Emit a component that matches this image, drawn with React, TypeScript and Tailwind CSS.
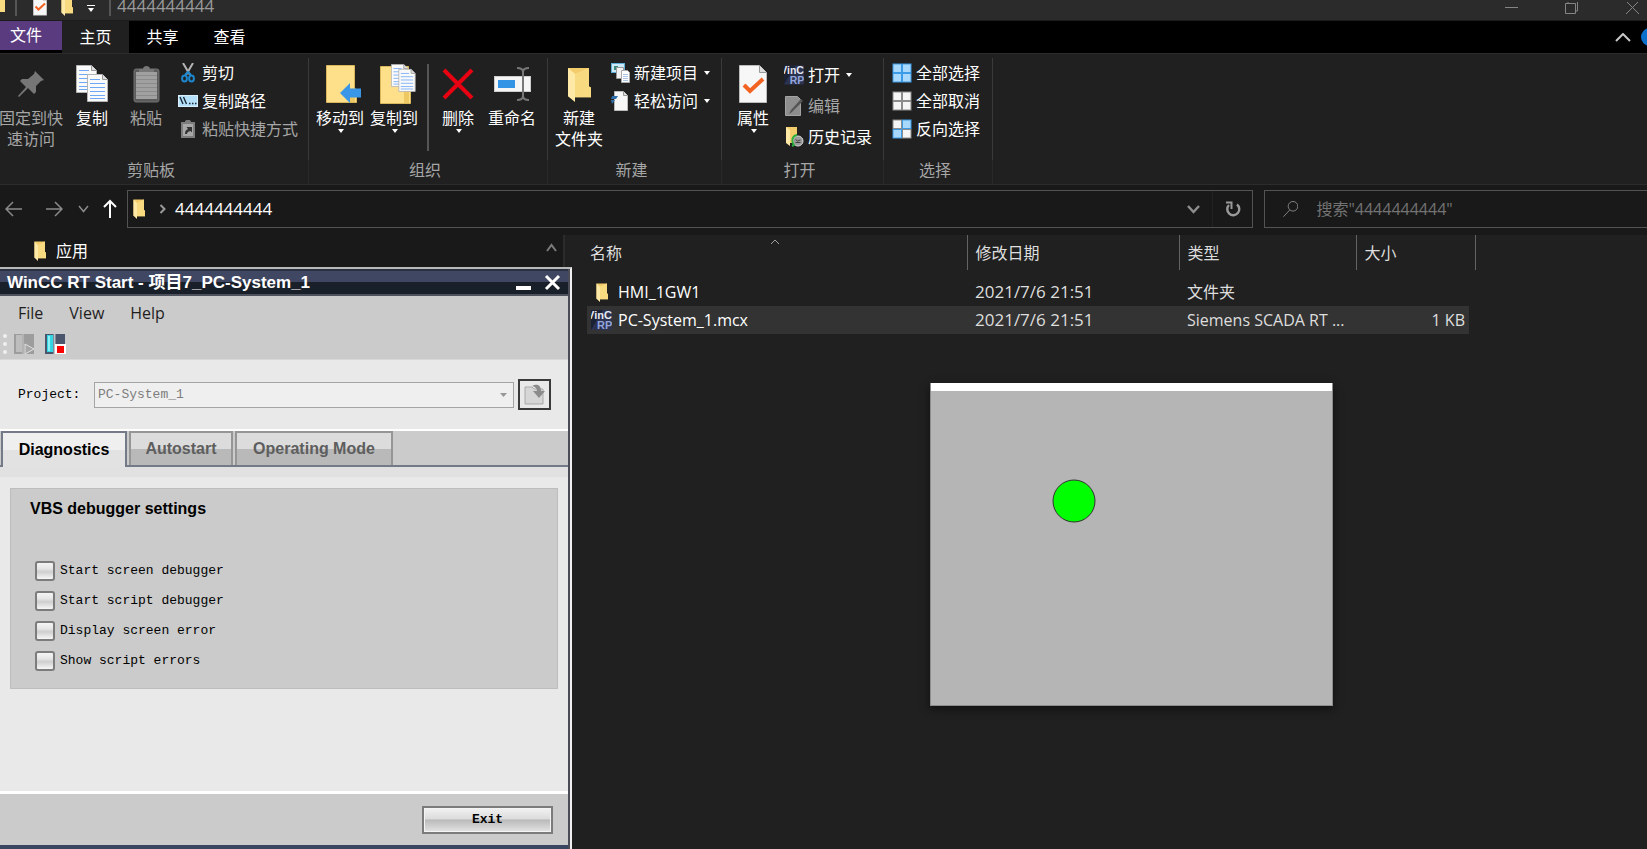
import type { ReactNode } from "react";

const UI_FONT = "font-['Open_Sans','Noto_Sans_CJK_SC',sans-serif]";
const MONO_FONT = "font-['Liberation_Mono',monospace]";
const BOLD_FONT = "font-['Liberation_Sans','Noto_Sans_CJK_SC',sans-serif]";

/* ---------- icons ---------- */

function FolderIcon({ className = "h-5 w-3" }: { className?: string }) {
  return (
    <svg className={className} viewBox="0 0 24 36" preserveAspectRatio="none" aria-hidden="true">
      <path d="M1 1h21v19l2 1v10H8L1 30z" fill="#f3cd6b" />
      <path d="M8 7l14-6v19l2 1v10H8z" fill="#f8da80" />
      <path d="M1 1l7 6v29l-7-6z" fill="#ffe9a6" />
    </svg>
  );
}

function PinIcon() {
  return (
    <svg width="28" height="28" viewBox="0 0 28 28" aria-hidden="true">
      <path d="M18 1l9 9-3 1-5 5 0 6-2 2-6-6-9 9-1-1 8-9-6-6 2-2 6 0 6-5z" fill="#767676" />
    </svg>
  );
}

function Sheet({ x, y }: { x: number; y: number }) {
  return (
    <g transform={`translate(${x} ${y})`}>
      <path d="M.5.5h15l5 5v22H.5z" fill="#fafafa" stroke="#b4b4b4" />
      <path d="M15.500.5v5h5" fill="#ddd" stroke="#999" />
      <path d="M3 5.500h10M3 9.500h15M3 13.500h15M3 17.500h15M3 21.500h15M3 24.500h15" stroke="#6fa8f5" />
    </g>
  );
}

function CopyIcon() {
  return (
    <svg width="33" height="38" viewBox="0 0 33 38" aria-hidden="true">
      <Sheet x={0} y={0} />
      <Sheet x={11} y={9} />
    </svg>
  );
}

function PasteIcon() {
  return (
    <svg width="27" height="38" viewBox="0 0 27 38" aria-hidden="true">
      <rect x="1" y="4" width="25" height="33" rx="2" fill="#5c5c5c" stroke="#707070" />
      <rect x="3" y="7" width="21" height="27" fill="#a0a0a0" />
      <path d="M3 10.500h21M3 14.500h21M3 18.500h21M3 22.500h21M3 26.500h21M3 30.500h21" stroke="#8b8b8b" />
      <path d="M6 7V4h4c0-4 7-4 7 0h4v3z" fill="#777" />
    </svg>
  );
}

function ScissorsIcon() {
  return (
    <svg width="14" height="20" viewBox="0 0 14 20" aria-hidden="true">
      <path d="M2 0l7 12M12 0L5 12" stroke="#b5b5b5" strokeWidth="2" fill="none" />
      <ellipse cx="3.500" cy="15.500" rx="2.400" ry="3" fill="none" stroke="#1e86cc" strokeWidth="2" />
      <ellipse cx="10.500" cy="15.500" rx="2.400" ry="3" fill="none" stroke="#1e86cc" strokeWidth="2" />
      <path d="M4 12l3-3 3 3" stroke="#1e86cc" strokeWidth="2" fill="none" />
    </svg>
  );
}

function CopyPathIcon() {
  return (
    <svg width="20" height="12" viewBox="0 0 20 12" aria-hidden="true">
      <rect x=".5" y=".5" width="19" height="11" fill="#b4e0fa" stroke="#d9effb" />
      <path d="M2 2l3 7M5.500 2l3 7" stroke="#1b2a35" strokeWidth="1.400" />
      <path d="M11 8.500h1.500M14 8.500h1.500M17 8.500h1.500" stroke="#1b2a35" strokeWidth="1.600" />
    </svg>
  );
}

function PasteShortcutIcon() {
  return (
    <svg width="14" height="18" viewBox="0 0 14 18" aria-hidden="true">
      <path d="M0 2h4c0-3 6-3 6 0h4v16H0z" fill="#7d7d7d" />
      <rect x="2" y="4" width="10" height="12" fill="#a8a8a8" />
      <path d="M4 14c0-3 1-4 3-5L5.500 7H11v5.500L9.500 11C7 11.500 6 12.500 6 14z" fill="#333" />
    </svg>
  );
}

function MoveToIcon() {
  return (
    <svg className="ml-2" width="36" height="38" viewBox="0 0 36 38" aria-hidden="true">
      <path d="M.5.500h28v23l2 1v13H.5z" fill="#ffe08a" stroke="#d9b75c" />
      <path d="M24 24l5-1v14h-5z" fill="#eec862" />
      <path d="M14 28l10-10v5.500h11v9H24V38z" fill="#3a97e8" />
    </svg>
  );
}

function CopyToIcon() {
  return (
    <svg className="ml-2" width="36" height="40" viewBox="0 0 36 40" aria-hidden="true">
      <path d="M.5 2.500h28v23l2 1v13H.5z" fill="#ffe08a" stroke="#d9b75c" />
      <path d="M24 26l5-1v14h-5z" fill="#eec862" />
      <g transform="translate(11 0) scale(.82)">
        <Sheet x={0} y={0} />
        <Sheet x={9} y={6} />
      </g>
    </svg>
  );
}

function DeleteIcon() {
  return (
    <svg width="32" height="32" viewBox="0 0 32 32" aria-hidden="true">
      <path d="M2 2l28 28M30 2L2 30" stroke="#e60012" strokeWidth="4" />
    </svg>
  );
}

function RenameIcon() {
  return (
    <svg width="37" height="34" viewBox="0 0 37 34" aria-hidden="true">
      <rect x=".5" y="9.500" width="36" height="15" fill="#f5f5f5" stroke="#ccc" />
      <rect x="4" y="13" width="17" height="8" fill="#3393e4" />
      <path d="M23 1c4 0 6 1 6 4v24c0 3-2 4-6 4M35 1c-4 0-6 1-6 4v24c0 3 2 4 6 4" fill="none" stroke="#777" strokeWidth="2" />
    </svg>
  );
}

function NewItemIcon() {
  return (
    <svg width="19" height="20" viewBox="0 0 19 20" aria-hidden="true">
      <rect x=".5" y=".5" width="13" height="9" fill="#cde9f7" stroke="#5fb0d8" />
      <path d="M3 3h4v4H3z" fill="#3a8a7c" />
      <path d="M5.500 4.500h7v11h-7z" fill="#f2f2f2" stroke="#999" />
      <path d="M10.500 7.500h6l2 2v10h-8z" fill="#fff" stroke="#aaa" />
      <path d="M12 11.500h5M12 13.500h5M12 15.500h5M12 17.500h5" stroke="#a9c4e6" />
    </svg>
  );
}

function EasyAccessIcon() {
  return (
    <svg width="18" height="20" viewBox="0 0 18 20" aria-hidden="true">
      <path d="M3.500.5h9l4 4v15h-13z" fill="#f7f7f7" stroke="#bbb" />
      <path d="M12.500.5v4h4" fill="#ddd" stroke="#999" />
      <path d="M1 5h6l-2 3H0zM0 9h4L1 13z" fill="#2f6fae" />
    </svg>
  );
}

function CheckDocIcon({ className = "h-[38px] w-7" }: { className?: string }) {
  return (
    <svg className={className} viewBox="0 0 28 38" aria-hidden="true">
      <path d="M.5.5h20l7 7v30H.5z" fill="#f7f7f7" stroke="#bdbdbd" />
      <path d="M20.500.5v7h7" fill="#ddd" stroke="#999" />
      <path d="M5 20l6 6 13-12" fill="none" stroke="#f26322" strokeWidth="4" />
    </svg>
  );
}

function WinCCIcon() {
  return (
    <svg width="21" height="20" viewBox="0 0 21 20" className="overflow-hidden" aria-hidden="true">
      <rect width="21" height="20" fill="#2c3350" />
      <path d="M0 0h12L0 20z" fill="#1c2235" />
      <text x="-4" y="9" fontSize="11" fontWeight="700" fill="#e6e9f2" fontFamily="Liberation Sans, sans-serif">VinC</text>
      <text x="6" y="19" fontSize="11" fontWeight="700" fill="#93a5dc" fontFamily="Liberation Sans, sans-serif">RP</text>
    </svg>
  );
}

function EditIcon() {
  return (
    <svg width="18" height="20" viewBox="0 0 18 20" aria-hidden="true">
      <path d="M.5.5h12l3 3v16H.5z" fill="#8e8e8e" stroke="#a3a3a3" />
      <path d="M4 18l2-4L16 3l2 2L7 16z" fill="#555" />
    </svg>
  );
}

function HistoryIcon() {
  return (
    <svg width="19" height="20" viewBox="0 0 19 20" aria-hidden="true">
      <path d="M1 0h11v16H1z" fill="#f3cd6b" />
      <path d="M1 0l4 3v16l-4-3z" fill="#ffe9a6" />
      <circle cx="13" cy="14" r="5" fill="#9a9a9a" stroke="#d8d8d8" />
      <path d="M10.500 12.500l2 1.500 3-1M10.500 15.500h5" stroke="#444" fill="none" />
      <path d="M12 8c-5 1-6 6-3 10l-2 1" stroke="#2fae3e" strokeWidth="2" fill="none" />
    </svg>
  );
}

function TilesIcon({ on }: { on: boolean[] }) {
  return (
    <svg width="20" height="20" viewBox="0 0 20 20" aria-hidden="true">
      {on.map((lit, i) => (
        <rect
          key={i}
          x={i % 2 ? 10.5 : 1}
          y={i > 1 ? 10.5 : 1}
          width="8.500"
          height="8.500"
          fill={lit ? "#a8d8fb" : "#f5f5f5"}
          stroke={lit ? "#3c9be6" : "#8c8c8c"}
        />
      ))}
    </svg>
  );
}

function Caret() {
  return (
    <svg width="6" height="4" viewBox="0 0 6 4" aria-hidden="true">
      <path d="M0 0h6L3 4z" fill="#fff" />
    </svg>
  );
}

/* ---------- explorer ---------- */

function TitleBar() {
  return (
    <div className="flex h-[21px] items-start overflow-hidden border-b border-[#1c1c1c] bg-[#2b2b2b]">
      <span className="h-3 w-[5px] bg-[#f8da80]" />
      <span className="ml-2.5 h-4 w-0.5 bg-[#565656]" />
      <CheckDocIcon className="-mt-1 ml-4 h-5 w-[14px]" />
      <FolderIcon className="-mt-1 ml-[14px] h-5 w-3" />
      <svg className="mt-[5px] ml-3.5" width="8" height="7" viewBox="0 0 8 7" aria-hidden="true">
        <path d="M0 .5h8" stroke="#fff" />
        <path d="M1 3h6L4 7z" fill="#fff" />
      </svg>
      <span className="ml-3.5 h-4 w-0.5 bg-[#565656]" />
      <span className="ml-1.5 -mt-1 text-[17px] leading-5 text-[#9a9a9a]">4444444444</span>
      <div className="ml-auto flex items-start text-[#858585]">
        <button aria-label="Minimize" className="mr-[47px] h-4">
          <svg width="13" height="12" viewBox="0 0 13 12"><path d="M0 5.500h13" stroke="currentColor" /></svg>
        </button>
        <button aria-label="Restore" className="mr-12 h-4">
          <svg width="13" height="12" viewBox="0 0 13 12" fill="none" stroke="currentColor">
            <path d="M.5 1.500h10v10H.5zM3 1V-1h9.500V9H11" />
          </svg>
        </button>
        <button aria-label="Close" className="mr-2 h-4">
          <svg width="13" height="12" viewBox="0 0 13 12"><path d="M0-1l13 13M13-1L0 12" stroke="currentColor" /></svg>
        </button>
      </div>
    </div>
  );
}

function RibbonTabs() {
  return (
    <div className="flex h-8 overflow-hidden bg-black text-[16px] leading-[29px] text-white">
      <button className="h-[29px] w-[62px] bg-[#5b3b80] pr-2.5">文件</button>
      <button className="h-8 w-[67px] bg-[#202020] leading-8">主页</button>
      <button className="h-8 w-[67px] leading-8">共享</button>
      <button className="h-8 w-[67px] leading-8">查看</button>
      <div className="ml-auto flex items-center">
        <button aria-label="Collapse ribbon" className="mr-2.5">
          <svg width="16" height="9" viewBox="0 0 16 9"><path d="M1 8l7-7 7 7" fill="none" stroke="#c8c8c8" strokeWidth="2" /></svg>
        </button>
        <button aria-label="Help" className="-mr-3 h-[18px] w-[18px] rounded-full bg-[#0a70cc]" />
      </div>
    </div>
  );
}

function Group({ label, className, children }: { label: string; className: string; children: ReactNode }) {
  return (
    <section className={`flex shrink-0 flex-col ${className}`}>
      <div className="mt-1 flex h-[102px] border-r border-[#3a3a3a]">{children}</div>
      <div className="border-r border-[#292929] pr-1.5 pb-1 text-center text-[16px] leading-5 text-[#a6a6a6]">{label}</div>
    </section>
  );
}

type LargeProps = { icon: ReactNode; lines: string[]; caret?: boolean; dim?: boolean; className?: string };

function LargeButton({ icon, lines, caret, dim, className = "w-[54px]" }: LargeProps) {
  return (
    <button className={`flex shrink-0 flex-col items-center pt-1 ${dim ? "text-[#a6a6a6]" : "text-white"} ${className}`}>
      <span className="mb-0.5 flex h-11 items-center">{icon}</span>
      {lines.map((line) => (
        <span key={line} className="text-[16px] leading-[21px] whitespace-nowrap">{line}</span>
      ))}
      {caret && <span className="ml-0.5 flex"><Caret /></span>}
    </button>
  );
}

type SmallProps = { icon: ReactNode; label: string; caret?: boolean; dim?: boolean };

function SmallButton({ icon, label, caret, dim }: SmallProps) {
  return (
    <button className={`flex h-7 items-center text-[16px] whitespace-nowrap ${dim ? "text-[#a6a6a6]" : "text-white"}`}>
      <span className="mr-1 flex w-5 justify-center">{icon}</span>
      {label}
      {caret && <span className="ml-1.5 flex"><Caret /></span>}
    </button>
  );
}

function Ribbon() {
  return (
    <div className="flex overflow-hidden border-y border-[#2c2c2c] bg-[#202020]">
      <Group label="剪贴板" className="w-[309px]">
        <LargeButton icon={<PinIcon />} lines={["固定到快", "速访问"]} dim className="w-[62px]" />
        <LargeButton icon={<CopyIcon />} lines={["复制"]} className="w-[60px]" />
        <LargeButton icon={<PasteIcon />} lines={["粘贴"]} dim className="w-12" />
        <div className="ml-2 flex flex-col pt-px">
          <SmallButton icon={<ScissorsIcon />} label="剪切" />
          <SmallButton icon={<CopyPathIcon />} label="复制路径" />
          <SmallButton icon={<PasteShortcutIcon />} label="粘贴快捷方式" dim />
        </div>
      </Group>
      <Group label="组织" className="w-[239px]">
        <LargeButton icon={<MoveToIcon />} lines={["移动到"]} caret className="ml-1 w-[54px]" />
        <LargeButton icon={<CopyToIcon />} lines={["复制到"]} caret />
        <span className="mt-1.5 ml-1.5 h-[87px] w-0.5 bg-[#555]" />
        <LargeButton icon={<DeleteIcon />} lines={["删除"]} caret className="ml-0.5 w-[54px]" />
        <LargeButton icon={<RenameIcon />} lines={["重命名"]} />
      </Group>
      <Group label="新建" className="w-[174px]">
        <LargeButton icon={<FolderIcon className="h-[35px] w-6" />} lines={["新建", "文件夹"]} className="ml-1 w-[54px]" />
        <div className="ml-1 flex flex-col pt-px">
          <SmallButton icon={<NewItemIcon />} label="新建项目" caret />
          <SmallButton icon={<EasyAccessIcon />} label="轻松访问" caret />
        </div>
      </Group>
      <Group label="打开" className="w-[162px]">
        <LargeButton icon={<CheckDocIcon />} lines={["属性"]} caret className="ml-1 w-[54px]" />
        <div className="ml-1 flex flex-col gap-[3px] pt-[3px]">
          <SmallButton icon={<WinCCIcon />} label="打开" caret />
          <SmallButton icon={<EditIcon />} label="编辑" dim />
          <SmallButton icon={<HistoryIcon />} label="历史记录" />
        </div>
      </Group>
      <Group label="选择" className="w-[109px]">
        <div className="ml-2 flex flex-col pt-px">
          <SmallButton icon={<TilesIcon on={[true, true, true, true]} />} label="全部选择" />
          <SmallButton icon={<TilesIcon on={[false, false, false, false]} />} label="全部取消" />
          <SmallButton icon={<TilesIcon on={[false, true, true, false]} />} label="反向选择" />
        </div>
      </Group>
    </div>
  );
}

function AddressBar() {
  return (
    <div className="flex h-[50px] items-center pt-1 pb-1.5">
      <div className="flex w-[127px] shrink-0 items-center pl-[5px] text-[#8a8a8a]">
        <button aria-label="Back">
          <svg width="18" height="16" viewBox="0 0 18 16" fill="none" stroke="currentColor" strokeWidth="1.500"><path d="M17 8H1M8 1L1 8l7 7" /></svg>
        </button>
        <button aria-label="Forward" className="ml-[22px]">
          <svg width="18" height="16" viewBox="0 0 18 16" fill="none" stroke="currentColor" strokeWidth="1.500"><path d="M1 8h16M10 1l7 7-7 7" /></svg>
        </button>
        <button aria-label="Recent locations" className="ml-[15px]">
          <svg width="11" height="8" viewBox="0 0 11 8" fill="none" stroke="currentColor" strokeWidth="1.500"><path d="M1 1l4.500 5.500L10 1" /></svg>
        </button>
        <button aria-label="Up" className="ml-3.5 text-white">
          <svg width="14" height="20" viewBox="0 0 14 20" fill="none" stroke="currentColor" strokeWidth="2"><path d="M7 19V2M1 8l6-6 6 6" /></svg>
        </button>
      </div>
      <div className="flex h-[38px] flex-1 items-center border border-[#535353] pl-[5px]">
        <FolderIcon className="h-5 w-3" />
        <svg className="ml-3.5" width="8" height="10" viewBox="0 0 8 10" aria-hidden="true">
          <path d="M1.500 1l4 4-4 4" fill="none" stroke="#9a9a9a" strokeWidth="2" />
        </svg>
        <a href="#folder" className="ml-2 text-[17px] text-white">4444444444</a>
        <button aria-label="Previous locations" className="mr-3 ml-auto">
          <svg width="13" height="9" viewBox="0 0 13 9"><path d="M1 1l5.500 6L12 1" fill="none" stroke="#8e8e8e" strokeWidth="2.500" /></svg>
        </button>
        <button aria-label="Refresh" className="flex h-full w-10 items-center justify-center border-l border-[#222]">
          <svg width="16" height="17" viewBox="0 0 16 17" fill="none" stroke="#9a9a9a" strokeWidth="2.400">
            <path d="M12 3.500A6 6 0 1 1 4 4" />
            <path d="M1 1.500h5.500V8" strokeWidth="2" />
          </svg>
        </button>
      </div>
      <label className="ml-[11px] flex h-[38px] w-[383px] items-center border border-r-0 border-[#535353] pl-[18px]">
        <svg width="17" height="18" viewBox="0 0 17 18" fill="none" stroke="#8a8a8a" aria-hidden="true">
          <circle cx="11" cy="6" r="5.300" />
          <path d="M7.500 10L.5 17.500" />
        </svg>
        <input
          aria-label="搜索"
          placeholder={'搜索"4444444444"'}
          className="ml-[18px] w-full bg-transparent text-[16px] text-white outline-none placeholder:text-[#737373]"
        />
      </label>
    </div>
  );
}

const columns = ["修改日期", "类型"];

const files = [
  { name: "HMI_1GW1", icon: <FolderIcon className="h-[19px] w-3" />, date: "2021/7/6 21:51", type: "文件夹", size: "" },
  { name: "PC-System_1.mcx", icon: <WinCCIcon />, date: "2021/7/6 21:51", type: "Siemens SCADA RT ...", size: "1 KB", hover: true },
];

function FileList() {
  return (
    <div className="relative flex-1 overflow-hidden bg-[#202020] pl-[22px]">
      <svg className="absolute top-1 left-[205px]" width="10" height="6" viewBox="0 0 10 6" aria-hidden="true">
        <path d="M1 5l4-4 4 4" fill="none" stroke="#a0a0a0" />
      </svg>
      <table className="w-[888px] table-fixed border-collapse">
        <colgroup>
          <col className="w-[380px]" />
          <col className="w-[212px]" />
          <col className="w-[177px]" />
          <col className="w-[113px]" />
          <col className="w-1.5" />
        </colgroup>
        <thead>
          <tr className="h-[35px] text-left text-[16px] text-[#dedede]">
            <th className="border-r border-[#636363] pl-[3px] font-normal">名称</th>
            {columns.map((name) => (
              <th key={name} className="border-r border-[#636363] pl-2 font-normal">{name}</th>
            ))}
            <th colSpan={2} className="border-r border-[#636363] pl-2 font-normal">大小</th>
          </tr>
        </thead>
        <tbody className="text-[16px] leading-7 whitespace-nowrap text-[#dedede] before:block before:h-2 before:content-['']">
          {files.map((file) => {
            const bg = file.hover ? "bg-[#333]" : "";
            return (
              <tr key={file.name} className="h-7">
                <td className={`${bg} py-0 pl-1`}>
                  <span className="flex items-center text-white">
                    <span className="mr-1.5 flex w-[21px] justify-center">{file.icon}</span>
                    {file.name}
                  </span>
                </td>
                <td className={`${bg} py-0 pl-2 text-[17px]`}>{file.date}</td>
                <td className={`${bg} py-0 pl-2`}>{file.type}</td>
                <td className={`${bg} py-0 pr-1 text-right`}>{file.size}</td>
                <td />
              </tr>
            );
          })}
        </tbody>
      </table>
    </div>
  );
}

function Explorer() {
  return (
    <div className="flex min-h-screen flex-col bg-[#191919]">
      <TitleBar />
      <RibbonTabs />
      <Ribbon />
      <AddressBar />
      <main className="flex flex-1">
        <nav className="flex w-[565px] shrink-0 items-start border-r-2 border-[#2b2b2b] pl-[34px]">
          <a href="#apps" className="flex h-8 items-center gap-2.5 text-[16px] text-white">
            <FolderIcon className="h-5 w-3" />
            应用
          </a>
          <span className="mt-2 mr-1.5 ml-auto">
            <svg width="11" height="9" viewBox="0 0 11 9" aria-hidden="true">
              <path d="M1 8l4.500-6L10 8" fill="none" stroke="#7b7b7b" strokeWidth="2" />
            </svg>
          </span>
        </nav>
        <FileList />
      </main>
    </div>
  );
}

/* ---------- WinCC RT Start ---------- */

const options = ["Start screen debugger", "Start script debugger", "Display screen error", "Show script errors"];

const idleTab =
  "border-2 border-b-0 border-[#969696] bg-[linear-gradient(#dcdcdc_50%,#b9b9b9_50%)] text-[#5e5e5e]";

function RuntimeWindow() {
  return (
    <section className="absolute top-[267px] bottom-0 left-0 flex w-[572px] flex-col border-t-2 border-r-2 border-t-[#b8b8b8] border-r-[#f0f0f0] bg-[#e9e9e9] text-black">
      <div className="flex min-h-0 flex-1 flex-col border-r-2 border-[#4a4d55]">
        <header className="flex h-[27px] shrink-0 items-center border-t-2 border-b-2 border-t-[#2b3040] border-b-[#4d525c] bg-[linear-gradient(#3f4762_50%,#1a202a_50%)] pl-[7px] text-white">
          <h1 className={`${BOLD_FONT} text-[17px] leading-5 font-bold`}>WinCC RT Start - 项目7_PC-System_1</h1>
          <button aria-label="Minimize window" className="mr-[13px] ml-auto flex h-[14px] items-end">
            <span className="block h-1 w-[15px] bg-white" />
          </button>
          <button aria-label="Close window" className="mr-[7px]">
            <svg width="17" height="17" viewBox="0 0 17 17"><path d="M2 2l13 13M15 2L2 15" stroke="#fff" strokeWidth="3" /></svg>
          </button>
        </header>

        <div className="h-16 shrink-0 bg-[#cbcbcb]">
          <div className="flex h-[33px] items-center gap-[26px] pl-[18px] text-[16px] text-[#1e1e1e]">
            <button>File</button>
            <button>View</button>
            <button>Help</button>
          </div>
          <div className="flex h-[31px] items-center border-b border-[#d8d8d8] pl-[3px]">
            <span className="mr-[7px] h-5 border-l-4 border-dotted border-[#efefef]" />
            <button aria-label="Start runtime" className="mr-2.5">
              <svg width="21" height="20" viewBox="0 0 21 20">
                <path d="M0 0h20v20H0z" fill="#9d9d9d" />
                <path d="M2 1h6v17H2z" fill="#bdbdbd" />
                <path d="M9 0v20" stroke="#c9c9c9" />
                <path d="M11 10l9 5-9 5z" fill="#a6a6a6" stroke="#e0e0e0" />
              </svg>
            </button>
            <button aria-label="Stop runtime">
              <svg width="21" height="20" viewBox="0 0 21 20">
                <path d="M0 0h20v20H0z" fill="#4b566c" />
                <path d="M2 1h6v17H2z" fill="#35d6e4" />
                <path d="M3 2h2v15H3z" fill="#8af2f6" />
                <path d="M9.500 0v20" stroke="#b9c1c9" strokeWidth="2" />
                <path d="M11 11h9v9h-9z" fill="#f00" stroke="#fff" strokeWidth="2" />
              </svg>
            </button>
          </div>
        </div>

        <div className="flex h-[69px] shrink-0 items-center pl-[18px]">
          <label htmlFor="project" className={`${MONO_FONT} w-[76px] text-[13px]`}>Project:</label>
          <div className="relative mr-1 flex-1">
            <select
              id="project"
              disabled
              className={`${MONO_FONT} block h-[26px] w-full appearance-none border border-[#a5a5a5] bg-[#efefef] pl-[3px] text-[13px] text-[#7d7d7d] opacity-100`}
            >
              <option>PC-System_1</option>
            </select>
            <svg className="pointer-events-none absolute top-[11px] right-[7px]" width="7" height="4" viewBox="0 0 7 4" aria-hidden="true">
              <path d="M0 0h7L3.500 4z" fill="#979797" />
            </svg>
          </div>
          <button aria-label="Open project" className="mr-[17px] flex h-[31px] w-[33px] items-center justify-center border-2 border-[#3a3a3a]">
            <svg width="22" height="21" viewBox="0 0 22 21">
              <path d="M1 3h7l2 2h9v15H1z" fill="#d6d6d6" stroke="#a9a9a9" />
              <path d="M8 2c6-3 9 0 9 5h4l-6 7-6-7h4c0-3-2-4-5-5z" fill="#8b8b8b" />
            </svg>
          </button>
        </div>

        <div className="h-[38px] shrink-0 border-t-2 border-b-2 border-t-white border-b-[#747a88] bg-[#cbcbcb]">
          <div role="tablist" className={`${BOLD_FONT} flex h-9 gap-0.5 pl-px text-[16px] font-bold`}>
            <button role="tab" aria-selected="true" className="h-9 w-[126px] border-2 border-b-0 border-[#747a88] bg-[linear-gradient(#efefef_50%,#e2e2e2_50%)]">
              Diagnostics
            </button>
            <button role="tab" aria-selected="false" className={`h-[34px] w-[104px] ${idleTab}`}>Autostart</button>
            <button role="tab" aria-selected="false" className={`h-[34px] w-[158px] ${idleTab}`}>Operating Mode</button>
          </div>
        </div>

        <div className="min-h-0 flex-1 border-t-[10px] border-[#e1e1e1] px-2.5 pt-[11px]">
          <fieldset className="h-[201px] border border-[#bdbdbd] bg-[#cbcbcb] pt-2.5 pl-[19px]">
            <h2 className={`${BOLD_FONT} text-[16px] leading-5 font-bold`}>VBS debugger settings</h2>
            <div className="mt-[37px] ml-[5px] flex flex-col">
              {options.map((option) => (
                <label key={option} className={`${MONO_FONT} flex h-[30px] items-center gap-[5px] text-[13px]`}>
                  <input
                    type="checkbox"
                    className="h-5 w-5 appearance-none rounded-[3px] border-2 border-[#7c7c7c] bg-[linear-gradient(#f4f4f4,#e6e6e6_35%,#cdcfcd_55%,#f6f6f6)]"
                  />
                  {option}
                </label>
              ))}
            </div>
          </fieldset>
        </div>

        <footer className="flex h-[58px] shrink-0 items-center justify-end border-t-[3px] border-b-4 border-t-white border-b-[#3a4560] bg-[#cbcbcb] pr-[15px]">
          <button className={`${MONO_FONT} h-7 w-[131px] border-2 border-[#7b7b7b] bg-[linear-gradient(#f2f2f2,#dcdcdc_45%,#bababa_50%,#e4e4e4)] text-[13px] font-bold shadow-[inset_0_0_0_1px_#f4f4f4]`}>
            Exit
          </button>
        </footer>
      </div>
    </section>
  );
}

function ScreenWindow() {
  return (
    <section className="absolute top-[383px] left-[930px] h-[323px] w-[403px] border border-[#8c8c8c] border-t-0 bg-[#b5b5b5] shadow-[0_3px_8px_#111]">
      <div className="h-2 bg-white" />
      <svg className="absolute top-24 left-[121px]" width="44" height="44" viewBox="0 0 44 44" aria-hidden="true">
        <circle cx="22" cy="22" r="21" fill="#0f0" stroke="#333" />
      </svg>
    </section>
  );
}

export default function App() {
  return (
    <div className={`relative overflow-hidden ${UI_FONT}`}>
      <Explorer />
      <RuntimeWindow />
      <ScreenWindow />
    </div>
  );
}
